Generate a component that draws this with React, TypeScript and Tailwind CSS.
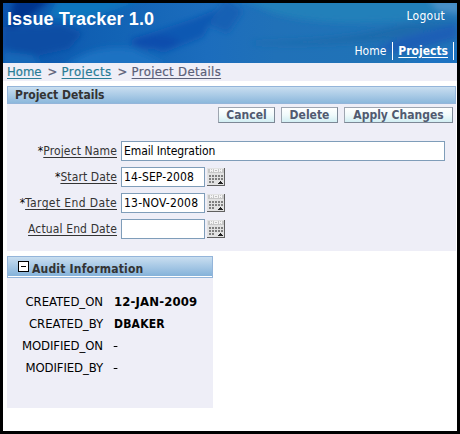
import type { ReactNode } from "react";

function HeaderArt() {
  return (
    <svg className="absolute inset-0 h-full w-full" viewBox="0 0 454 60" preserveAspectRatio="none" aria-hidden="true">
      <defs>
        <linearGradient id="sea" x1="0" x2="1" y1="0" y2="0">
          <stop offset="0" stopColor="#0b54ac" />
          <stop offset="0.25" stopColor="#1263b5" />
          <stop offset="0.45" stopColor="#1c6dbd" />
          <stop offset="0.6" stopColor="#2071b8" />
          <stop offset="1" stopColor="#2074b6" />
        </linearGradient>
        <filter id="soft" x="-20%" y="-40%" width="140%" height="180%">
          <feGaussianBlur stdDeviation="3" />
        </filter>
      </defs>
      <rect width="454" height="60" fill="url(#sea)" />
      <g filter="url(#soft)">
        <path d="M12 -6H50L26 14L4 28Z" fill="#06348e" />
        <path d="M55 -4H140L80 18L45 14Z" fill="#1176be" />
        <path d="M0 24L60 22L80 30L66 46L20 56L0 44Z" fill="#0a4ea4" />
        <path d="M0 48L30 52L40 64H0Z" fill="#1468b8" />
        <path d="M60 64Q90 40 130 46L160 60V64Z" fill="#1c72c2" />
        <path d="M130 36L190 16L215 6L200 34L160 50Z" fill="#1158b2" />
        <ellipse cx="152" cy="39" rx="24" ry="7" fill="#0f4ead" />
        <path d="M232 -6H420L454 -4V8L400 18Q320 24 270 10Z" fill="#2080ba" />
        <path d="M222 -4L240 8L225 30L205 22Z" fill="#1760b4" />
        <path d="M250 39Q340 38 400 22L454 18L390 36Q320 44 250 41Z" fill="#1a6aac" />
        <path d="M370 46L400 34L454 20V36L400 50Z" fill="#1c5eb6" />
        <path d="M395 64L454 42V64Z" fill="#1d72c2" />
        <path d="M425 -4H458V12L435 8Z" fill="#4a90c8" />
      </g>
    </svg>
  );
}

function CalendarIcon() {
  return (
    <svg width="18" height="18" viewBox="0 0 18 18" shapeRendering="crispEdges" aria-hidden="true">
      <rect width="18" height="18" fill="#e2e2e2" />
      <path d="M1 1H17V5H1Z" fill="#c8c8c8" />
      <path d="M3 1h1v3H3zM4 2h1v1H4zM5 1h1v3H5zM7 1h4v3H7zM12 1h1v3h-1zM13 2h1v1h-1zM14 1h1v3h-1z" fill="#f4f4f4" />
      <path d="M8 2h2v1H8z" fill="#c0c0c0" />
      <path
        d="M2 7h2v2H2zM5 7h2v2H5zM8 7h2v2H8zM11 7h2v2h-2zM14 7h2v2h-2zM2 10h2v2H2zM5 10h2v2H5zM8 10h2v2H8zM11 10h2v2h-2zM14 10h2v2h-2zM2 13h2v2H2zM5 13h2v2H5z"
        fill="#808080"
      />
      <path d="M13 13h1v1h1v1h1v1h-5v-1h1v-1h1z" fill="#222" />
      <path d="M17 0h1v18H0v-1h17z" fill="#606060" />
    </svg>
  );
}

function Button({ children, className }: { children: ReactNode; className: string }) {
  return (
    <button
      className={`flex h-4 items-center justify-center whitespace-nowrap border border-t-[#9ea5b0] border-r-[#7d8896] border-b-[#7d8896] border-l-[#9ea5b0] bg-linear-to-b from-white via-[#f0fafb] to-[#d2eef3] text-[12px] font-bold text-[#515a70] ${className}`}
    >
      {children}
    </button>
  );
}

function Field({
  label,
  labelClass,
  required,
  value,
  valueClass,
  wide,
}: {
  label: string;
  labelClass: string;
  required?: boolean;
  value: string;
  valueClass: string;
  wide?: boolean;
}) {
  return (
    <div className="flex h-5 items-center">
      <div className="flex w-[110px] justify-end whitespace-nowrap text-[12px] leading-5 text-[#333]">
        {required && <span className="text-black">*</span>}
        <span className={`underline underline-offset-2 ${labelClass}`}>{label}</span>
      </div>
      <div
        className={`ml-1 flex h-5 items-center whitespace-nowrap border border-[#7f9db9] bg-white pl-0.5 text-[12px] text-black ${wide ? "w-[324px]" : "w-[84px]"} ${valueClass}`}
      >
        {value}
      </div>
      {!wide && (
        <div className="ml-0.5">
          <CalendarIcon />
        </div>
      )}
    </div>
  );
}

function AuditRow({ label, labelClass, value, valueClass }: { label: string; labelClass: string; value: string; valueClass: string }) {
  return (
    <div className="flex h-[22px] items-center whitespace-nowrap text-[12px] text-black">
      <div className={`flex w-24 justify-end text-[13px] ${labelClass}`}>{label}</div>
      <div className={`ml-2.5 ${valueClass}`}>{value}</div>
    </div>
  );
}

export default function App() {
  return (
    <div className="h-[434px] w-[460px] overflow-hidden border-[3px] border-black bg-white font-['DejaVu_Sans_Condensed','DejaVu_Sans',sans-serif] [font-stretch:condensed]">
      <header className="relative h-[60px] overflow-hidden text-white">
        <HeaderArt />
        <div className="relative flex h-full justify-between">
          <h1 className="pt-1 pl-1 font-['Liberation_Sans',Arial,sans-serif] text-[18px] leading-6 font-bold tracking-[0.12px] whitespace-nowrap">
            Issue Tracker 1.0
          </h1>
          <div className="flex flex-col items-end justify-between pr-[3px] text-[12px]">
            <a className="mt-[5px] mr-[9px] leading-4 tracking-[0.25px]">Logout</a>
            <nav className="mb-[3px] flex h-[18px] items-center">
              <a className="pr-1.5">Home</a>
              <a className="flex h-[18px] items-center border-x border-white px-[5px] font-bold underline underline-offset-2">
                Projects
              </a>
            </nav>
          </div>
        </div>
      </header>

      <nav className="flex h-[18px] items-center gap-1.5 bg-[#eeeef7] pl-1 text-[13px] whitespace-nowrap text-[#5a6078] [-webkit-text-stroke:0.2px]">
        <a className="text-[#287c96] underline underline-offset-2">Home</a>
        <span className="w-2 -tracking-[1px]">&gt;</span>
        <a className="tracking-[0.5px] text-[#287c96] underline underline-offset-2">Projects</a>
        <span className="w-2">&gt;</span>
        <a className="tracking-[0.35px] underline underline-offset-2">Project Details</a>
      </nav>

      <main className="pt-[5px] pl-1">
        <section className="h-[165px] w-[449px] bg-[#eeeef7]">
          <h2 className="flex h-[18px] items-center border border-[#94b5da] bg-linear-to-b from-[#c9def0] to-[#8cb8dc] pl-[7px] text-[12px] font-bold text-[#333]">
            Project Details
          </h2>
          <div className="flex justify-end gap-1.5 pt-[3px] pr-[3px]">
            <Button className="w-[57px]">Cancel</Button>
            <Button className="w-[57px]">Delete</Button>
            <Button className="w-[109px]">Apply Changes</Button>
          </div>
          <div className="mt-[18px] flex flex-col gap-1.5">
            <Field label="Project Name" labelClass="tracking-[0.13px]" required value="Email Integration" valueClass="tracking-[-0.1px]" wide />
            <Field label="Start Date" labelClass="tracking-[0.1px]" required value="14-SEP-2008" valueClass="tracking-[0.1px]" />
            <Field label="Target End Date" labelClass="tracking-[0.37px]" required value="13-NOV-2008" valueClass="tracking-[0.2px]" />
            <Field label="Actual End Date" labelClass="tracking-[0.13px]" value="" valueClass="" />
          </div>
        </section>

        <section className="mt-[5px] h-[152px] w-[206px] bg-[#eeeef7]">
          <h2 className="flex h-[22px] border border-[#94b5da] bg-white pb-px text-[12px] font-bold text-[#333]">
            <span className="flex w-full bg-linear-to-b from-[#c9def0] to-[#84b2da] pl-2.5">
              <span className="mt-1 flex h-[11px] w-[11px] items-center justify-center border border-black bg-white">
                <span className="h-px w-[5px] bg-black" />
              </span>
              <span className="ml-[3px] pt-[3px] tracking-[0.2px]">Audit Information</span>
            </span>
          </h2>
          <div className="pt-[13px]">
            <AuditRow label="CREATED_ON" labelClass="tracking-[-0.05px]" value="12-JAN-2009" valueClass="pl-px text-[13px] font-bold tracking-[0.15px]" />
            <AuditRow label="CREATED_BY" labelClass="tracking-[-0.05px]" value="DBAKER" valueClass="pl-px font-bold tracking-[0.2px]" />
            <AuditRow label="MODIFIED_ON" labelClass="tracking-[-0.1px]" value="-" valueClass="origin-left scale-x-[1.3]" />
            <AuditRow label="MODIFIED_BY" labelClass="tracking-[-0.1px]" value="-" valueClass="origin-left scale-x-[1.3]" />
          </div>
        </section>
      </main>
    </div>
  );
}
